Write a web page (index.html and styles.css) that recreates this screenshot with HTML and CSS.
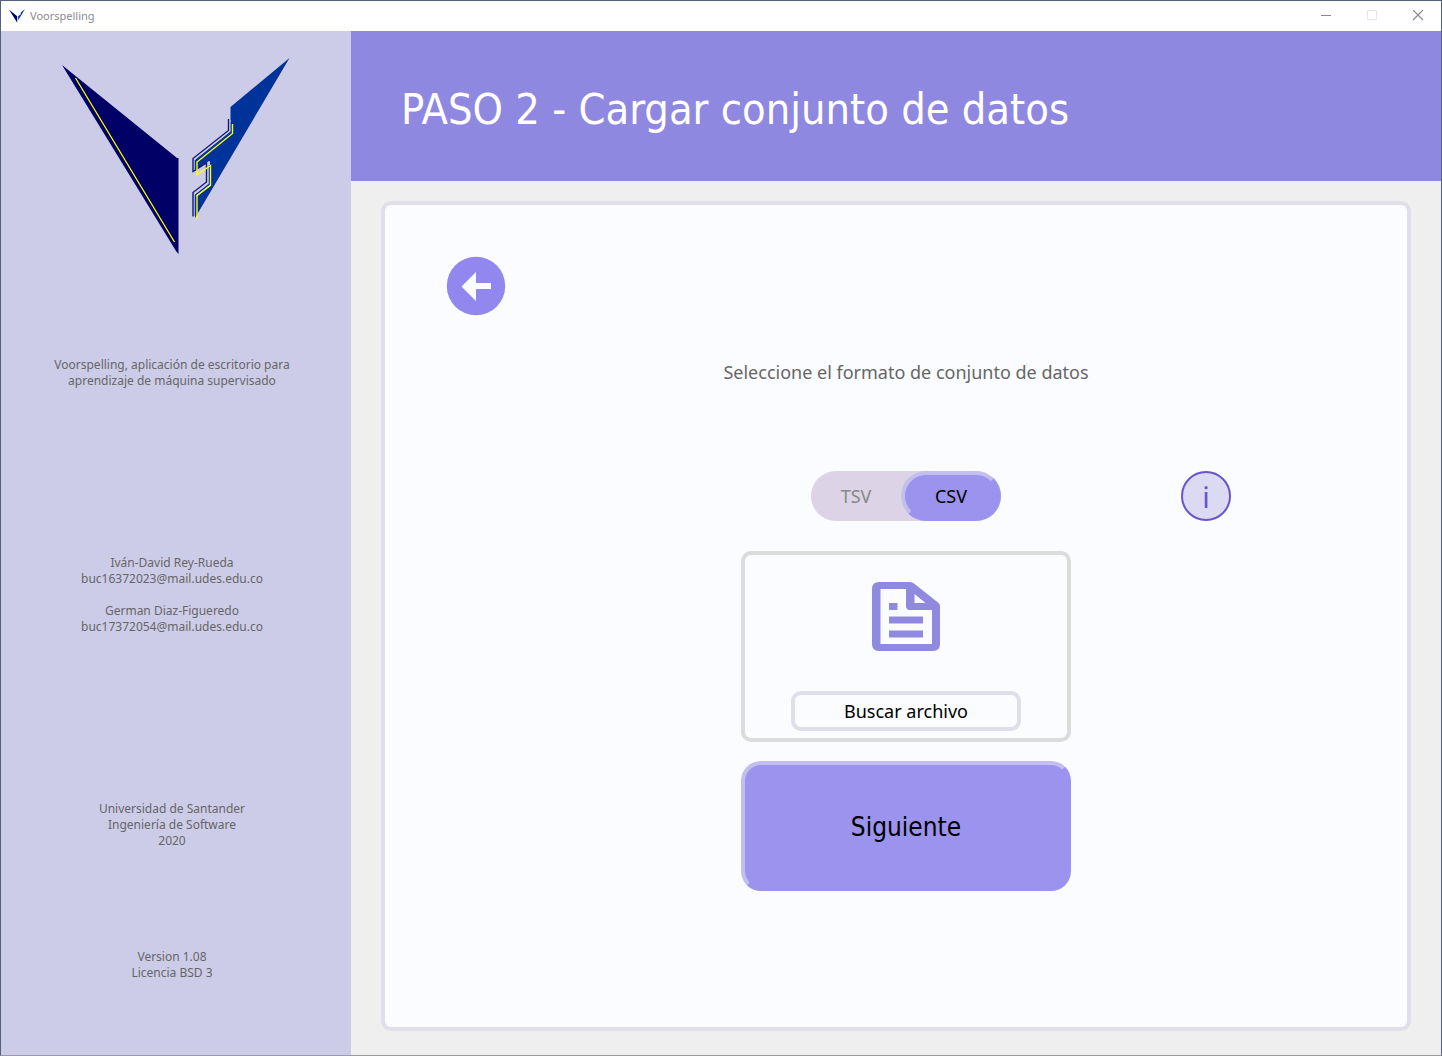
FILE: index.html
```html
<!DOCTYPE html>
<html lang="es">
<head>
<meta charset="utf-8">
<meta name="viewport" content="width=device-width, initial-scale=1">
<title>Voorspelling</title>
<link rel="stylesheet" href="styles.css">
</head>
<body>
<div class="window">
  <header class="titlebar">
    <svg class="titlebar-icon" viewBox="60 56 232 200" aria-hidden="true">
      <path fill="#000066" d="M62 65 179 158V254Z"/>
      <path fill="#003399" d="M290 58 231 107V130L193 160V216Z"/>
    </svg>
    <span class="titlebar-name">Voorspelling</span>
    <div class="window-controls">
      <button class="window-button" type="button" aria-label="Minimizar">
        <svg width="12" height="12" viewBox="0 0 12 12"><path d="M1 5.500H11" stroke="#888"/></svg>
      </button>
      <button class="window-button" type="button" aria-label="Maximizar" disabled>
        <svg width="12" height="12" viewBox="0 0 12 12"><path d="M1.500 .5H10.500V9.500H1.500Z" fill="none" stroke="#e6e6e6"/></svg>
      </button>
      <button class="window-button" type="button" aria-label="Cerrar">
        <svg width="12" height="12" viewBox="0 0 12 12"><path d="M1 0 11 10M11 0 1 10" stroke="#888" stroke-width="1.100"/></svg>
      </button>
    </div>
  </header>

  <div class="layout">
    <aside class="sidebar">
      <svg class="logo" width="230" height="200" viewBox="61 56 230 200" role="img" aria-label="Logo de Voorspelling">
        <path fill="#000066" d="M62 65 177 158H178.500V254L176 251Z"/>
        <path fill="none" stroke="#ffff00" stroke-width="1.300" d="M75.500 78 174.500 242"/>
        <path fill="#003399" d="M289.500 58 230.500 107V131L195 158.500V170L210 161V186L195 198V218Z"/>
        <g fill="none">
          <path stroke="#cccce9" stroke-width="2" d="M229.500 120V131L195 159V172L208 163V185L195 196V216"/>
          <path stroke="#191970" stroke-width="1.400" d="M228.500 119V130.500L193 158.500V171.500L206.500 163V182L193 192.500V216.500"/>
          <path stroke="#003399" stroke-width="1.500" d="M231.500 122V132.500L195.500 160.500V171M209.500 165V184L195.500 195V216"/>
          <path stroke="#ffff00" stroke-width="1.400" d="M232.500 124V133.500L197 162V175L210.500 165.500V185.500L197 195.500V219"/>
        </g>
      </svg>
      <p class="about">Voorspelling, aplicación de escritorio para<br>aprendizaje de máquina supervisado</p>
      <div class="authors">
        <p>Iván-David Rey-Rueda<br>buc16372023@mail.udes.edu.co</p>
        <p>German Diaz-Figueredo<br>buc17372054@mail.udes.edu.co</p>
      </div>
      <p class="university">Universidad de Santander<br>Ingeniería de Software<br>2020</p>
      <p class="version">Version 1.08<br>Licencia BSD 3</p>
    </aside>

    <main class="main">
      <div class="banner"><h1>PASO 2 - Cargar conjunto de datos</h1></div>
      <section class="card">
        <button class="back" type="button" aria-label="Volver">
          <svg width="60" height="60" viewBox="0 0 60 60"><circle cx="30" cy="30" r="29.200" fill="#9187ee"/><path fill="#fbfcff" d="M15.500 30.500 30 16V27H45V33H30V45Z"/></svg>
        </button>
        <h2 class="prompt">Seleccione el formato de conjunto de datos</h2>
        <div class="format-row">
          <div class="toggle">
            <button class="toggle-option" type="button" aria-pressed="false">TSV</button>
            <button class="toggle-option selected" type="button" aria-pressed="true">CSV</button>
          </div>
          <button class="info" type="button" aria-label="Información">i</button>
        </div>
        <div class="file-box">
          <svg width="68" height="70" viewBox="0 0 68 70" aria-hidden="true">
            <path fill="#9089e0" fill-rule="evenodd" d="M7 0H38Q40 0 42 1.500L66 20.500Q68 22 68 24V62Q68 69 61 69H7Q0 69 0 62V7Q0 0 7 0ZM8.500 7V62H60V28H38Q34 28 34 24V7ZM42.500 12V21H53.500Z"/>
            <path fill="#9089e0" d="M17 21H25.500V28H17ZM17 34.500H51V41.500H17ZM17 48.500H51V55.500H17Z"/>
          </svg>
          <button class="browse" type="button">Buscar archivo</button>
        </div>
        <button class="next" type="button">Siguiente</button>
      </section>
    </main>
  </div>
</div>
</body>
</html>
```
FILE: styles.css
```css
* { box-sizing: border-box; }

body {
  margin: 0;
  font-family: Tahoma, "Noto Sans", sans-serif;
  color: #666;
}

h1, h2, p { margin: 0; font-weight: normal; }

button {
  margin: 0;
  padding: 0;
  border: 0;
  background: none;
  color: #000;
  font: inherit;
}

svg { display: block; }

.window {
  display: flex;
  flex-direction: column;
  min-height: 100vh;
  border: 1px solid #55617d;
  border-bottom-color: #9a9a9e;
}

.titlebar {
  display: flex;
  align-items: center;
  height: 30px;
  padding-left: 8px;
  background: #fff;
  color: #8c8c8c;
  font-size: 11px;
  line-height: 14px;
}

.titlebar-icon { width: 16px; height: 16px; margin-right: 5px; }
.window-controls { display: flex; margin-left: auto; }

.window-button {
  display: grid;
  place-items: center;
  width: 46px;
  height: 30px;
}

.layout { display: flex; flex: 1; }

.sidebar {
  display: flex;
  flex: 0 0 350px;
  flex-direction: column;
  align-items: center;
  padding: 25px 8px 24px 0;
  background: #cccce9;
  text-align: center;
  font-size: 12px;
  line-height: 16px;
}

.logo { margin-left: 8px; }
.about { margin-top: 101px; }
.authors { display: grid; gap: 16px; margin-top: 166px; }
.university { margin-top: 166px; }
.version { margin-top: 100px; }

.main {
  display: flex;
  flex: 1;
  flex-direction: column;
  background: #efefef;
}

.banner {
  display: flex;
  align-items: center;
  min-height: 150px;
  padding: 6px 50px 0;
  background: #8f88e0;
  color: #fff;
}

.banner h1,
.next {
  font-family: Tahoma, "DejaVu Sans Condensed", "DejaVu Sans", sans-serif;
  font-stretch: condensed;
}

.banner h1 { font-size: 43px; line-height: 52px; }

.card {
  display: flex;
  flex: 1;
  flex-direction: column;
  align-items: center;
  margin: 20px 30px 24px;
  padding: 51px 41px 40px 61px;
  border: 4px solid #e1deeb;
  border-radius: 10px;
  background: #fbfcff;
}

.back { align-self: flex-start; }

.prompt {
  margin-top: 44px;
  font-size: 18px;
  line-height: 24px;
}

.format-row {
  display: grid;
  grid-template-columns: 1fr 190px 1fr;
  align-self: stretch;
  margin-top: 87px;
}

.toggle {
  display: flex;
  grid-column: 2;
  height: 50px;
  border-radius: 25px;
  background: #dcd3e6;
  font-size: 18px;
}

.toggle-option { flex: 1; color: #888; }

.toggle-option.selected {
  flex: 0 0 100px;
  border: 4px solid #9b93ee;
  border-top-color: #c4beee;
  border-left-color: #c4beee;
  border-radius: 25px;
  background: #9b93ee;
  color: #000;
}

.info {
  width: 50px;
  height: 50px;
  margin-left: 180px;
  border: 2px solid #6a54c8;
  border-radius: 50%;
  background: #dcdaf2;
  color: #6a54c8;
  font-size: 29px;
}

.file-box {
  display: flex;
  flex-direction: column;
  align-items: center;
  width: 330px;
  margin-top: 30px;
  padding: 27px 0 7px;
  border: 4px solid #dcdcdc;
  border-radius: 10px;
}

.browse {
  width: 230px;
  height: 40px;
  margin-top: 39px;
  border: 4px solid #e1deeb;
  border-radius: 10px;
  font-size: 18px;
}

.next {
  width: 330px;
  height: 130px;
  margin-top: 19px;
  padding-top: 2px;
  border: 4px solid #9b93ee;
  border-top-color: #c4beee;
  border-left-color: #c4beee;
  border-radius: 20px;
  background: #9b93ee;
  font-size: 26px;
}
```
